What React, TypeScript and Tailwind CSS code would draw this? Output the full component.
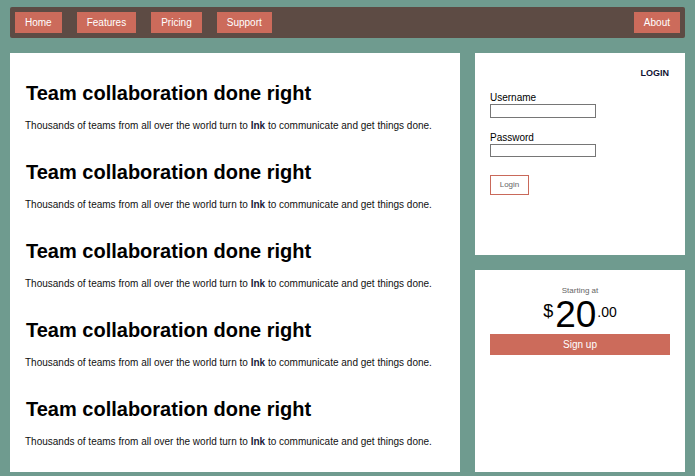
import React from "react";

const sections = [0, 1, 2, 3, 4];

export default function App() {
  return (
    <div className="w-[695px] h-[476px] bg-[#6f9b8f] px-[10px] pt-[7px] overflow-hidden" style={{ fontFamily: '"Liberation Sans", Arial, sans-serif' }}>
      <nav className="h-[31px] bg-[#5d4b44] rounded-[2px] flex items-center px-[5px]">
        <a className="h-[21px] px-[10px] flex items-center bg-[#cc6b5b] text-white text-[10px]">Home</a>
        <a className="ml-[15px] h-[21px] px-[10px] flex items-center bg-[#cc6b5b] text-white text-[10px]">Features</a>
        <a className="ml-[15px] h-[21px] px-[10px] flex items-center bg-[#cc6b5b] text-white text-[10px]">Pricing</a>
        <a className="ml-[15px] h-[21px] px-[10px] flex items-center bg-[#cc6b5b] text-white text-[10px]">Support</a>
        <a className="ml-auto h-[21px] px-[10px] flex items-center bg-[#cc6b5b] text-white text-[10px]">About</a>
      </nav>
      <div className="mt-[15px] flex gap-[15px]">
        <main className="w-[450px] h-[419px] bg-white pt-[28px] pl-[16px]">
          {sections.map((i) => (
            <section key={i} className="h-[79px]">
              <h1 className="h-[24px] leading-[24px] text-[20px] font-bold text-black">Team collaboration done right</h1>
              <p className="mt-[15px] h-[12px] leading-[12px] text-[10px] text-[#111] -ml-px">
                Thousands of teams from all over the world turn to <b className="font-bold text-[#1a1a3a]">Ink</b> to communicate and get things done.
              </p>
            </section>
          ))}
        </main>
        <div className="w-[210px] flex flex-col gap-[15px]">
          <div className="h-[202px] bg-white px-[15px] pt-[14px]">
            <div className="text-right pr-px text-[9px] font-bold leading-[12px] text-[#111133]">LOGIN</div>
            <label className="block mt-[13px] text-[10px] leading-[12px] text-black">Username</label>
            <input className="block w-[106px] h-[14px] border border-[#767676] bg-white" />
            <label className="block mt-[14px] text-[10px] leading-[12px] text-black">Password</label>
            <input type="password" className="block w-[106px] h-[13px] border border-[#767676] bg-white" />
            <button className="mt-[18px] w-[39px] h-[20px] border border-[#c9695a] text-[8px] text-[#666] flex items-center justify-center bg-white">Login</button>
          </div>
          <div className="h-[202px] bg-white px-[15px] pt-[16px]">
            <div className="text-center text-[8px] leading-[10px] text-[#666]">Starting at</div>
            <div className="flex justify-center items-start h-[38px] text-black">
              <span className="text-[18px] leading-[18px] mt-[6px]">$</span>
              <span className="text-[37px] leading-[37px] ml-[2px]">20</span>
              <span className="text-[14px] leading-[14px] mt-[9px] ml-[1px]">.00</span>
            </div>
            <button className="w-[180px] h-[21px] bg-[#cc6b5b] text-white text-[10px] flex items-center justify-center">Sign up</button>
          </div>
        </div>
      </div>
    </div>
  );
}
